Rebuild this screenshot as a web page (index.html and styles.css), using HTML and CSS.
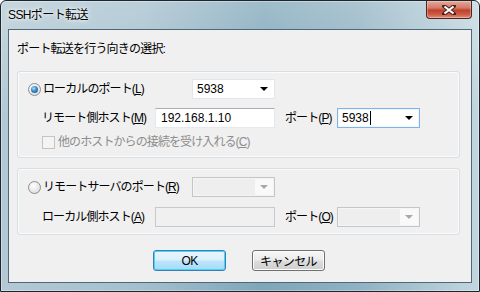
FILE: index.html
```html
<!DOCTYPE html>
<html lang="ja">
<head>
  <meta charset="UTF-8">
  <title>SSHポート転送</title>
  <link rel="stylesheet" href="styles.css">
</head>
<body>
  <div class="window">
    <div class="titlebar">
      <div class="title">SSHポート転送</div>
      <div class="close-btn">
        <svg width="14" height="10" viewBox="0 0 14 10">
          <path d="M2 1 L12 9 M12 1 L2 9" stroke="#4a2420" stroke-width="4" stroke-linecap="square"/>
          <path d="M2.5 1.5 L11.5 8.5 M11.5 1.5 L2.5 8.5" stroke="#ffffff" stroke-width="2.2"/>
        </svg>
      </div>
    </div>

    <div class="client">
      <div class="heading">ポート転送を行う向きの選択:</div>

      <div class="group">
        <div class="row row-radio">
          <span class="radio checked"></span>
          <span class="label wide">ローカルのポート(<u>L</u>)</span>
          <div class="combo">
            <span class="value">5938</span>
            <span class="arrow"></span>
          </div>
        </div>
        <div class="row row-indent">
          <span class="label host">リモート側ホスト(<u>M</u>)</span>
          <div class="edit">192.168.1.10</div>
          <span class="label port">ポート(<u>P</u>)</span>
          <div class="combo focused">
            <span class="value">5938<span class="caret"></span></span>
            <span class="arrow"></span>
          </div>
        </div>
        <div class="row row-indent row-check">
          <span class="checkbox"></span>
          <span class="label disabled">他のホストからの接続を受け入れる(<u>C</u>)</span>
        </div>
      </div>

      <div class="group second">
        <div class="row row-radio">
          <span class="radio"></span>
          <span class="label wide">リモートサーバのポート(<u>R</u>)</span>
          <div class="combo disabled">
            <span class="value"></span>
            <span class="drop"><span class="arrow"></span></span>
          </div>
        </div>
        <div class="row row-indent">
          <span class="label host">ローカル側ホスト(<u>A</u>)</span>
          <div class="edit disabled"></div>
          <span class="label port">ポート(<u>O</u>)</span>
          <div class="combo disabled">
            <span class="value"></span>
            <span class="drop"><span class="arrow"></span></span>
          </div>
        </div>
      </div>

      <div class="buttons">
        <button class="button default">OK</button>
        <button class="button">キャンセル</button>
      </div>
    </div>
  </div>
</body>
</html>
```

FILE: styles.css
```css
body {
  margin: 0;
  padding: 0;
  font-family: "Liberation Sans", "Noto Sans CJK JP", sans-serif;
  font-size: 12px;
  color: #000000;
  background: #ffffff;
}

.window {
  width: 480px;
  height: 292px;
  box-sizing: border-box;
  border: 1px solid #1c262e;
  border-radius: 6px 6px 0 0;
  padding: 0 7px 8px 7px;
  background:
    linear-gradient(180deg, rgba(255, 255, 255, 0.25) 0%, rgba(255, 255, 255, 0) 40%),
    linear-gradient(90deg, #b4c9d4 0%, #a3bfcd 30%, #7fa6b9 55%, #90b2c2 75%, #c2d6df 100%);
  box-shadow: inset 0 0 0 1px rgba(255, 255, 255, 0.35);
}

.titlebar {
  display: flex;
  align-items: flex-start;
  height: 28px;
}

.title {
  padding: 6px 0 0 0;
  line-height: 16px;
  font-size: 12px;
  letter-spacing: -0.6px;
  text-shadow: 0 0 6px #ffffff, 0 0 3px #ffffff;
}

.close-btn {
  margin-left: auto;
  width: 46px;
  height: 18px;
  box-sizing: border-box;
  border: 1px solid #4b2520;
  border-top: none;
  border-radius: 0 0 4px 4px;
  background: linear-gradient(180deg, #e8a899 0%, #d37b69 40%, #c0402c 55%, #cf5d45 80%, #e09179 100%);
  display: flex;
  align-items: center;
  justify-content: center;
  box-shadow: inset 0 0 0 1px rgba(255, 255, 255, 0.3);
}

.client {
  height: 254px;
  box-sizing: border-box;
  border: 1px solid #4e6878;
  background-color: #f0f0f0;
  padding: 12px 11px 0 8px;
}

.heading {
  height: 14px;
  line-height: 14px;
  letter-spacing: -0.8px;
  margin-bottom: 15px;
}

.group {
  width: 443px;
  box-sizing: border-box;
  border: 1px solid #d5dfe5;
  border-radius: 3px;
  box-shadow: inset 0 0 0 1px #fbfbfb;
  padding: 7px 0 8px 0;
  display: flex;
  flex-direction: column;
  gap: 9px;
}

.group.second {
  margin-top: 10px;
  padding: 8px 0 7px 0;
  gap: 10px;
}

.row {
  display: flex;
  align-items: center;
  height: 20px;
}

.row-radio {
  padding-left: 10px;
}

.row-indent {
  padding-left: 24px;
}

.row-check {
  height: 14px;
  margin-top: -2px;
}

.label {
  line-height: 20px;
  letter-spacing: -0.9px;
  white-space: nowrap;
}

.label.wide {
  width: 150px;
  padding-left: 1px;
  box-sizing: border-box;
}

.label.host {
  width: 113px;
}

.label.port {
  width: 52px;
  margin-left: 10px;
}

.label.disabled {
  color: #8d8d8d;
  line-height: 14px;
}

.radio {
  width: 13px;
  height: 13px;
  margin-right: 1px;
  box-sizing: border-box;
  border-radius: 50%;
  border: 1px solid #8b8d8f;
  background: radial-gradient(circle at 40% 35%, #ffffff 0%, #e6e6e6 60%, #cfcfcf 100%);
  position: relative;
}

.radio.checked::after {
  content: "";
  position: absolute;
  left: 2px;
  top: 2px;
  width: 7px;
  height: 7px;
  border-radius: 50%;
  background: radial-gradient(circle at 40% 35%, #b8e4fb 0%, #3c8ed2 40%, #144c86 100%);
}

.checkbox {
  width: 13px;
  height: 13px;
  box-sizing: border-box;
  border: 1px solid #c4c4c4;
  background: #f4f4f4;
  margin-right: 3px;
}

.combo {
  width: 83px;
  height: 20px;
  box-sizing: border-box;
  border: 1px solid #e2e5e9;
  background: #ffffff;
  display: flex;
  align-items: center;
  padding-left: 4px;
}

.combo.focused {
  border-color: #7eb4ea;
  box-shadow: inset 0 0 0 1px #eef5fc;
}

.combo .value {
  flex: 1;
  line-height: 18px;
  display: flex;
  align-items: center;
}

.caret {
  display: inline-block;
  width: 1px;
  height: 14px;
  background: #000000;
  margin-left: 1px;
}

.arrow {
  width: 0;
  height: 0;
  border-left: 4px solid transparent;
  border-right: 4px solid transparent;
  border-top: 4px solid #000000;
  margin-right: 6px;
}

.combo.disabled {
  border-color: #c2c5c9;
  background: #f4f4f4;
  padding: 1px;
}

.combo.disabled .value {
  background: #eeeeee;
  height: 16px;
}

.combo.disabled .drop {
  width: 18px;
  height: 16px;
  display: flex;
  align-items: center;
  justify-content: center;
  background: #f9f9f9;
}

.combo.disabled .arrow {
  border-top-color: #a8a8a8;
  margin-right: 0;
}

.edit {
  width: 120px;
  height: 20px;
  box-sizing: border-box;
  border: 1px solid #e3e9ef;
  border-top-color: #abadb3;
  background: #ffffff;
  padding-left: 5px;
  line-height: 18px;
}

.edit.disabled {
  border-color: #c6c8cb;
  background: #f0f0f0;
}

.buttons {
  display: flex;
  gap: 26px;
  padding-left: 136px;
  margin-top: 15px;
}

.button {
  width: 73px;
  height: 21px;
  padding: 0;
  font-family: "Liberation Sans", "Noto Sans CJK JP", sans-serif;
  font-size: 12px;
  letter-spacing: -0.6px;
  color: #000000;
  border: 1px solid #707070;
  border-radius: 3px;
  background: linear-gradient(180deg, #f6f6f6 0%, #ebebeb 48%, #dddddd 52%, #cfcfcf 100%);
  box-shadow: inset 0 0 0 1px #fcfcfc;
}

.button.default {
  border-color: #3c7fb1;
  background: linear-gradient(180deg, #eaf6fd 0%, #d9f0fc 48%, #bee6fd 52%, #a7d9f5 100%);
  box-shadow: inset 0 0 0 1px #48d4f8;
}
```
